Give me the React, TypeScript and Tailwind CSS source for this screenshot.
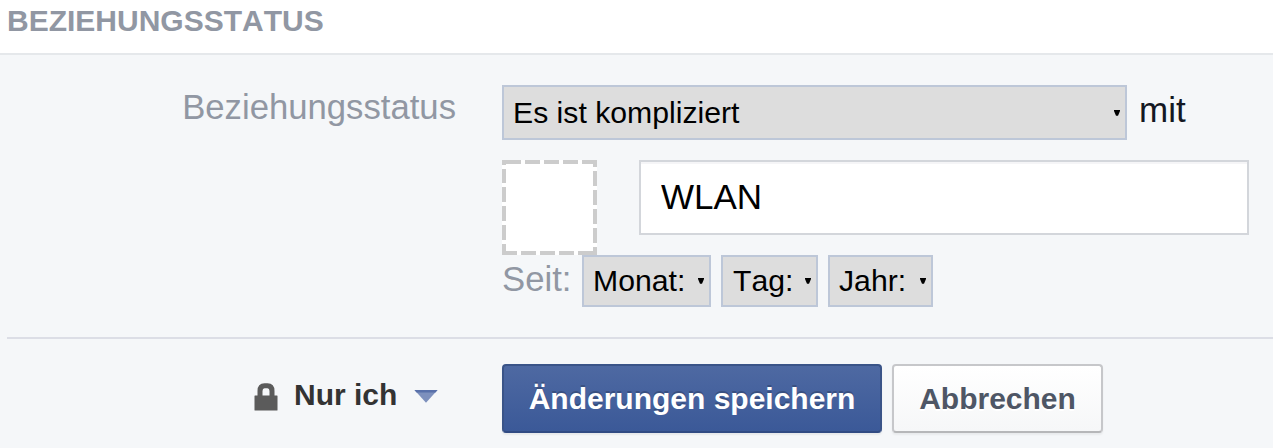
import type { ReactNode } from "react";

function Caret() {
  return (
    <svg className="h-[6px] w-[6px] shrink-0" viewBox="0 0 6 6" fill="#000">
      <path d="M0 0h6v1L4 5.800H2L0 1z" />
    </svg>
  );
}

function Select({ label, className }: { label: string; className: string }) {
  return (
    <button
      type="button"
      className={`flex items-center justify-between border-2 border-[#bdc7d8] bg-[#dddddd] pr-[5px] text-left whitespace-nowrap text-black ${className}`}
    >
      <span>{label}</span>
      <Caret />
    </button>
  );
}

function Label({ children, className }: { children: ReactNode; className: string }) {
  return <span className={`block text-[34.700px] leading-[40px] whitespace-nowrap text-[#9197a3] ${className}`}>{children}</span>;
}

function LockIcon() {
  return (
    <svg className="mt-[19px] ml-[254px] h-7 w-6 shrink-0" viewBox="0 0 24 28" fill="none">
      <path d="M6 14V8Q6 2.800 10.500 2.800h3q4.500 0 4.500 5.200V14" stroke="#5b5b5b" strokeWidth="5" />
      <rect x="0.500" y="12.500" width="23" height="15" rx="0.500" fill="#5b5b5b" />
    </svg>
  );
}

function PrivacyArrow() {
  return (
    <svg className="mt-[25px] ml-[17px] h-[14px] w-6 shrink-0" viewBox="0 0 24 14">
      <path d="M0.500 1h23L12 13.800z" fill="#7d90bd" />
      <path d="M0.500 1h23L21.500 3.500h-19z" fill="#5870aa" />
    </svg>
  );
}

export default function App() {
  return (
    <main className="h-[448px] w-[1273px] overflow-hidden bg-[#f5f7f9] font-['Liberation_Sans',Arial,sans-serif] [font-kerning:none]">
      <header className="h-[55px] border-b-2 border-[#e5e8eb] bg-white pt-[1px] pl-[7px]">
        <h1 className="text-[30px] leading-[40px] font-bold whitespace-nowrap text-[#9197a3]">BEZIEHUNGSSTATUS</h1>
      </header>

      <section className="flex h-[282px] pt-[30px]">
        <div className="w-[502px] shrink-0 pt-[2px] pr-[46px] text-right">
          <Label className="">Beziehungsstatus</Label>
        </div>
        <div>
          <div className="flex h-[75px]">
            <Select label="Es ist kompliziert" className="h-[55px] w-[625px] pl-[9px] text-[30.200px]" />
            <span className="pt-[5px] pl-[12px] text-[35px] leading-[40px] text-[#141823]">mit</span>
          </div>
          <div className="flex h-[95px]">
            <svg className="h-[95px] w-[95px]" viewBox="0 0 95 95" fill="none">
              <path d="M0 0h95v95H0z" fill="#fff" />
              <g stroke="#cccccc" strokeWidth="4">
                <path d="M0 2h95" strokeDasharray="19 4 15 4 15 4 15 4 15" />
                <path d="M93 0v95" strokeDasharray="7 4 15 4 15 4 15 4 15 4 8" />
                <path d="M95 93H0" strokeDasharray="19 4 15 4 15 4 15 4 15" />
                <path d="M2 95V0" strokeDasharray="11 4 15 4 15 4 15 4 14 4 5" />
              </g>
            </svg>
            <input
              readOnly
              value="WLAN"
              className="ml-[42px] h-[75px] w-[610px] border-2 border-[#d3d6db] bg-white pr-4 pb-[2px] pl-[20px] text-[35px] text-black shadow-[inset_0_2px_0_#f5f5f7] outline-none"
            />
          </div>
          <div className="flex">
            <Label className="w-[80px] pt-[4px]">Seit:</Label>
            <div className="flex gap-[10px] text-[30.200px]">
              <Select label="Monat:" className="h-[52px] w-[129px] pl-[9px]" />
              <Select label="Tag:" className="h-[52px] w-[97px] pl-[10px]" />
              <Select label="Jahr:" className="h-[52px] w-[105px] pl-[9px]" />
            </div>
          </div>
        </div>
      </section>

      <footer className="ml-[7px] flex h-[111px] border-t-2 border-[#dcdee6] pt-[25px]">
        <div className="-ml-[7px] flex w-[502px] shrink-0">
          <LockIcon />
          <span className="ml-[16px] pt-[11px] text-[30px] leading-[40px] font-bold whitespace-nowrap text-[#333333]">Nur ich</span>
          <PrivacyArrow />
        </div>
        <div className="flex gap-[10px] text-[30px] font-bold whitespace-nowrap">
          <button
            type="button"
            className="h-[69px] w-[380px] rounded-[4px] border-2 border-[#3a5488] border-b-[#314b83] bg-linear-to-b from-[#4e69a2] to-[#3b5998] text-white shadow-[0_2px_2px_rgba(0,0,0,0.06)] [text-shadow:0_-2px_0_rgba(0,0,0,0.2)]"
          >
            Änderungen speichern
          </button>
          <button
            type="button"
            className="h-[69px] w-[211px] rounded-[4px] border-2 border-[#c6c7ca] border-b-[#b6b7b9] bg-linear-to-b from-white to-[#f6f7f8] text-[#4e5665] shadow-[0_2px_2px_rgba(0,0,0,0.05)] [text-shadow:0_2px_0_#fff]"
          >
            Abbrechen
          </button>
        </div>
      </footer>
    </main>
  );
}
